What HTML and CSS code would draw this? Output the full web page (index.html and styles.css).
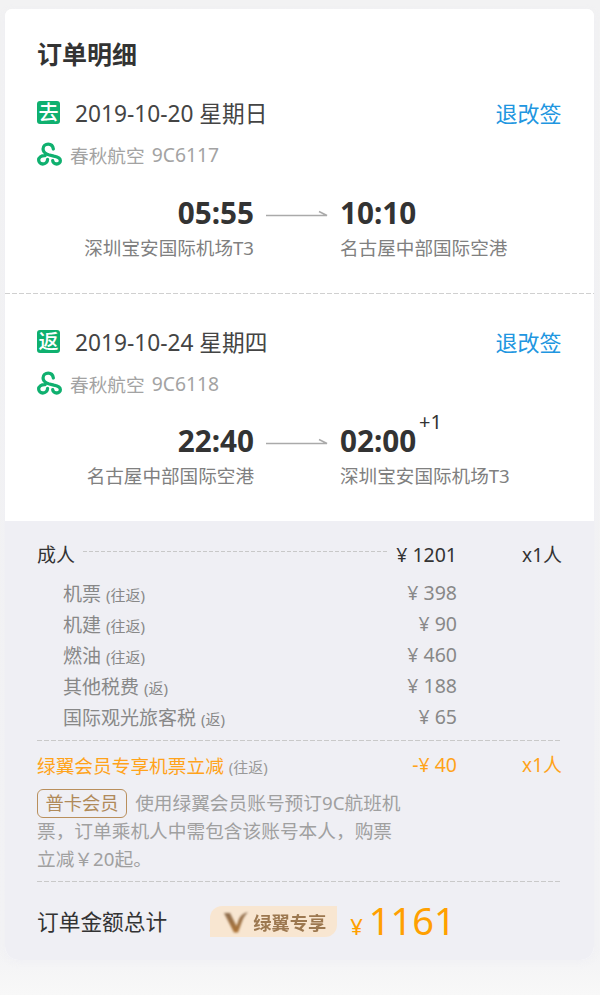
FILE: index.html
```html
<!DOCTYPE html>
<html lang="zh-CN">
<head>
<meta charset="utf-8">
<title>订单明细</title>
<link rel="stylesheet" href="styles.css">
</head>
<body>
<main class="card">
  <section class="flights">
    <h1 class="title">订单明细</h1>

    <article class="leg leg-out">
      <div class="leg-head">
        <span class="badge">去</span>
        <span class="date">2019-10-20 星期日</span>
        <a class="change">退改签</a>
      </div>
      <div class="carrier">
        <svg class="logo" viewBox="0 0 26 24"><path d="M17 6.800C16.500 3.300 14.300 1.700 11.700 1.700 8.700 1.700 6.300 4 6.300 6.800 6.300 9.800 9 11.800 12 12.800L17.500 14.200C21.500 15 24.300 16.500 24.300 19 24.300 21 22.500 22.400 20.500 22.400 18.300 22.400 16.500 20.800 16.300 18.800M8.500 13.600C4.500 13.400 1.700 15.500 1.700 18.300 1.700 20.600 3.700 22.400 6 22.400 8.800 22.400 11 20.300 11 17.500" /></svg>
        <span class="carrier-name">春秋航空</span>
        <span class="flight-no">9C6117</span>
      </div>
      <div class="times">
        <div class="point dep">
          <div class="time">05:55</div>
          <div class="airport">深圳宝安国际机场T3</div>
        </div>
        <svg class="arrow" viewBox="0 0 62 8"><path d="M0 6.500H61L53 2.500" /></svg>
        <div class="point arr">
          <div class="time">10:10</div>
          <div class="airport">名古屋中部国际空港</div>
        </div>
      </div>
    </article>

    <article class="leg leg-back">
      <div class="leg-head">
        <span class="badge">返</span>
        <span class="date">2019-10-24 星期四</span>
        <a class="change">退改签</a>
      </div>
      <div class="carrier">
        <svg class="logo" viewBox="0 0 26 24"><path d="M17 6.800C16.500 3.300 14.300 1.700 11.700 1.700 8.700 1.700 6.300 4 6.300 6.800 6.300 9.800 9 11.800 12 12.800L17.500 14.200C21.500 15 24.300 16.500 24.300 19 24.300 21 22.500 22.400 20.500 22.400 18.300 22.400 16.500 20.800 16.300 18.800M8.500 13.600C4.500 13.400 1.700 15.500 1.700 18.300 1.700 20.600 3.700 22.400 6 22.400 8.800 22.400 11 20.300 11 17.500" /></svg>
        <span class="carrier-name">春秋航空</span>
        <span class="flight-no">9C6118</span>
      </div>
      <div class="times">
        <div class="point dep">
          <div class="time">22:40</div>
          <div class="airport">名古屋中部国际空港</div>
        </div>
        <svg class="arrow" viewBox="0 0 62 8"><path d="M0 6.500H61L53 2.500" /></svg>
        <div class="point arr">
          <div class="time">02:00<sup class="plus">+1</sup></div>
          <div class="airport">深圳宝安国际机场T3</div>
        </div>
      </div>
    </article>
  </section>

  <section class="prices">
    <div class="adult-row">
      <span class="adult-label">成人</span>
      <span class="leader"></span>
      <span class="amount">¥ 1201</span>
      <span class="count">x1人</span>
    </div>
    <ul class="fees">
      <li class="fee"><span class="fee-name">机票 <small>(往返)</small></span><span class="amount">¥ 398</span></li>
      <li class="fee"><span class="fee-name">机建 <small>(往返)</small></span><span class="amount">¥ 90</span></li>
      <li class="fee"><span class="fee-name">燃油 <small>(往返)</small></span><span class="amount">¥ 460</span></li>
      <li class="fee"><span class="fee-name">其他税费 <small>(返)</small></span><span class="amount">¥ 188</span></li>
      <li class="fee"><span class="fee-name">国际观光旅客税 <small>(返)</small></span><span class="amount">¥ 65</span></li>
    </ul>
    <div class="promo">
      <div class="promo-row">
        <span class="promo-name">绿翼会员专享机票立减 <small>(往返)</small></span>
        <span class="amount">-¥ 40</span>
        <span class="count">x1人</span>
      </div>
      <p class="promo-note"><span class="tier">普卡会员</span>使用绿翼会员账号预订9C航班机票，订单乘机人中需包含该账号本人，购票立减￥20起。</p>
    </div>
    <div class="total">
      <span class="total-label">订单金额总计</span>
      <span class="member-tag">
        <svg class="member-v" viewBox="0 0 24 22"><defs><linearGradient id="vShade" x1="0" y1="0" x2="0" y2="1"><stop offset="0" stop-color="#8d6f52"/><stop offset="1" stop-color="#ad7335"/></linearGradient></defs><path fill="url(#vShade)" d="M0 2H6L12.500 15 15 8C16.500 4.500 20 2 24 1 21 4 19.500 6.500 18 10.500L14 21.500H10z" /></svg>
        <span class="member-text">绿翼专享</span>
      </span>
      <span class="total-price"><span class="yen">¥</span>1161</span>
    </div>
  </section>
</main>
</body>
</html>
```

FILE: styles.css
```css
* { box-sizing: border-box; }

html, body {
  margin: 0;
  height: 995px;
  overflow: hidden;
}

body {
  background: linear-gradient(#f2f2f3 0, #f3f3f5 950px, #f8f8f8 995px);
  font-family: "Noto Sans", "Noto Sans CJK SC", sans-serif;
  padding: 9px 6px 0 5px;
  color: #333;
}

.card {
  border-radius: 7px 7px 14px 14px;
  overflow: hidden;
  background: #fff;
  box-shadow: 0 2px 6px rgba(239, 239, 244, .8);
}

/* flight legs */
.flights { background: #fff; }

.title {
  margin: 0;
  padding: 25px 0 0 32px;
  font-size: 25px;
  line-height: 40px;
  font-weight: 700;
  color: #333;
}

.leg { padding: 0 32.500px 0 32px; }

.leg-out {
  height: 220px;
  padding-top: 18px;
  background: linear-gradient(90deg, #d0d0d0 5px, transparent 5px) left bottom / 7px 1px repeat-x;
}

.leg-back {
  height: 227px;
  padding-top: 27px;
}

.leg-back .times { margin-top: 20px; }

.leg-head {
  display: flex;
  align-items: center;
  height: 40px;
}

.badge {
  width: 23px;
  height: 23px;
  border-radius: 3px;
  background: #0fb06f;
  color: #fff;
  font-size: 20px;
  line-height: 23px;
  text-align: center;
  font-weight: 500;
}

.date {
  margin-left: 15px;
  font-size: 22.700px;
  color: #444;
}

.change {
  margin-left: auto;
  font-size: 22px;
  color: #2196e0;
}

.carrier {
  display: flex;
  align-items: center;
  margin-top: 4px;
  height: 36px;
  color: #a3a3a3;
  font-size: 18.700px;
}

.logo {
  width: 25px;
  height: 24px;
  fill: none;
  stroke: #0fb06f;
  stroke-width: 3.400;
  stroke-linecap: round;
}

.carrier-name { margin-left: 8px; }
.flight-no {
  margin-left: 7px;
  font-size: 19.300px;
}

.times {
  display: grid;
  grid-template-columns: 217px 62px 1fr;
  column-gap: 12px;
  margin-top: 21px;
}

.point { min-width: 0; }
.dep { text-align: right; }

.time {
  font-size: 29.700px;
  line-height: 40px;
  font-weight: 700;
  color: #333;
  position: relative;
}

.plus {
  position: absolute;
  top: -12px;
  left: 79px;
  font-size: 20px;
  font-weight: 400;
  line-height: 26px;
}

.airport {
  font-size: 18.600px;
  line-height: 30px;
  color: #808080;
  white-space: nowrap;
}

.arrow {
  width: 62px;
  height: 8px;
  margin-top: 16px;
  fill: none;
  stroke: #aaa;
  stroke-width: 1.500;
}

/* price breakdown */
.prices {
  background: #efeff4;
  padding: 17px 32px 0 32px;
  height: 439px;
  font-size: 19px;
  color: #333;
}

.adult-row, .promo-row {
  display: flex;
  align-items: center;
  height: 32px;
}

.leader {
  flex: 1;
  height: 1px;
  margin: -6px 9px 0 8px;
  background: linear-gradient(90deg, #c8c8c8 4px, transparent 4px) 0 0 / 6px 1px repeat-x;
}

.amount {
  font-size: 19.500px;
  white-space: nowrap;
}

.count {
  width: 105px;
  text-align: right;
  white-space: nowrap;
}

.fees {
  list-style: none;
  margin: 7px 0 0;
  padding: 0 105px 0 26px;
  color: #888;
}

.fee {
  display: flex;
  justify-content: space-between;
  align-items: center;
  height: 31px;
}

small { font-size: 15px; }

.promo {
  margin-top: 8px;
  height: 142px;
  color: #ffa31a;
  padding-top: 8px;
  background:
    linear-gradient(90deg, #c9c9c9 5px, transparent 5px) left top / 7px 1px repeat-x,
    linear-gradient(90deg, #c9c9c9 5px, transparent 5px) left bottom / 7px 1px repeat-x;
}

.promo-name {
  margin-right: auto;
  font-size: 18.700px;
}
.promo-name small { color: #999; }
.promo-row .amount { color: #ffa31a; }

.promo-note {
  margin: 9px 0 0;
  width: 368px;
  font-size: 18.700px;
  line-height: 28px;
  color: #a0a0a0;
}

.tier {
  display: inline-block;
  border: 1.500px solid #b98f5c;
  border-radius: 6px;
  color: #b08a5a;
  font-size: 18.300px;
  padding: 0 7.500px;
  height: 29px;
  line-height: 26px;
  margin: -2px 8px -2px 0;
  vertical-align: baseline;
}

.total {
  display: flex;
  align-items: center;
  height: 78px;
}

.total-label {
  font-size: 21.700px;
  color: #333;
  margin-top: -2px;
}

.member-tag {
  display: flex;
  align-items: center;
  width: 127px;
  height: 31px;
  margin: 1px 0 0 43px;
  padding-left: 14px;
  background: #f8e6d1;
  border-radius: 12px 0 12px 0;
}

.member-v {
  width: 24px;
  height: 22px;
  filter: blur(.9px);
}

.member-text {
  margin-left: 5px;
  font-size: 18.300px;
  font-weight: 700;
  color: #9c7850;
  filter: blur(.7px);
}

.total-price {
  margin: 4px 0 0 13px;
  font-size: 38px;
  line-height: 40px;
  color: #ffa000;
}

.yen {
  font-size: 22px;
  margin-right: 6px;
}
```
